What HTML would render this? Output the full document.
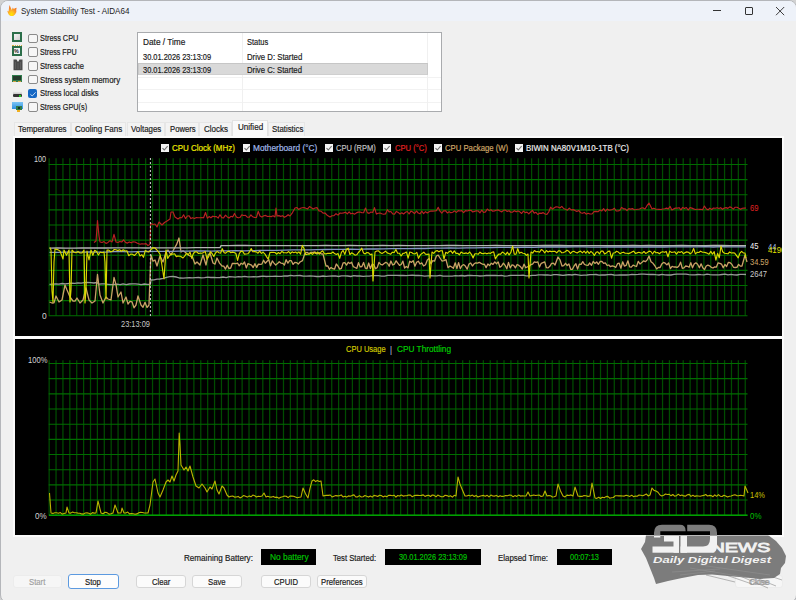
<!DOCTYPE html>
<html><head><meta charset="utf-8"><style>
html,body{margin:0;padding:0;}
body{width:796px;height:600px;position:relative;overflow:hidden;background:#f0f0f0;font-family:"Liberation Sans",sans-serif;}
.t{position:absolute;white-space:nowrap;transform-origin:0 0;line-height:1;-webkit-text-stroke:0.18px currentColor;}
</style></head><body>
<div style="position:absolute;left:0;top:0;width:796px;height:600px;background:#d2d2d2"></div><div style="position:absolute;left:0;top:0;width:797px;height:603px;box-sizing:border-box;border:1px solid #b4b6ba;border-radius:8px;background:#f0f0f0;overflow:hidden"><div style="height:20px;background:#eef2f9"></div></div><svg style="position:absolute;left:6px;top:4px" width="12" height="12" viewBox="0 0 12 12">
<defs><radialGradient id="fl" cx="0.45" cy="0.85" r="0.75"><stop offset="0" stop-color="#ffe800"/><stop offset="0.35" stop-color="#ffc020"/><stop offset="0.7" stop-color="#f89028"/><stop offset="1" stop-color="#f07020"/></radialGradient></defs>
<path d="M5 12.2 L3 11 L2 9 L1.3 6.8 L2.6 7.4 L3 4 L3.6 1 L4.6 3.4 L5.8 6 L6.8 3.6 L7.8 5 L9 4.2 L10.6 3.8 L10.2 6 L10.4 8 L9 10.6 L7.2 12 Z" fill="url(#fl)"/></svg><div class="t" style="left:21.40px;top:6.52px;font-size:8.6px;color:#1b1b1b;transform:scaleX(0.9355);-webkit-text-stroke:0;">System Stability Test - AIDA64</div><div style="position:absolute;left:713.3px;top:10.2px;width:8px;height:1px;background:#333"></div><div style="position:absolute;left:744.6px;top:6.9px;width:6.4px;height:6.4px;border:0.9px solid #333;border-radius:1px"></div><svg style="position:absolute;left:775px;top:6px" width="10" height="10" viewBox="0 0 10 10"><path d="M1 1 L9.2 9.2 M9.2 1 L1 9.2" stroke="#333" stroke-width="0.95"/></svg><div style="position:absolute;left:28px;top:33.5px;width:7.6px;height:7.6px;border:0.9px solid #8a8a8a;background:#f6f6f6;border-radius:2px"></div><div class="t" style="left:39.60px;top:34.29px;font-size:8.4px;color:#1a1a1a;transform:scaleX(0.8775);">Stress CPU</div><div style="position:absolute;left:28px;top:47.2px;width:7.6px;height:7.6px;border:0.9px solid #8a8a8a;background:#f6f6f6;border-radius:2px"></div><div class="t" style="left:39.60px;top:48.04px;font-size:8.4px;color:#1a1a1a;transform:scaleX(0.8547);">Stress FPU</div><div style="position:absolute;left:28px;top:61.0px;width:7.6px;height:7.6px;border:0.9px solid #8a8a8a;background:#f6f6f6;border-radius:2px"></div><div class="t" style="left:39.60px;top:61.79px;font-size:8.4px;color:#1a1a1a;transform:scaleX(0.9062);">Stress cache</div><div style="position:absolute;left:28px;top:74.8px;width:7.6px;height:7.6px;border:0.9px solid #8a8a8a;background:#f6f6f6;border-radius:2px"></div><div class="t" style="left:39.60px;top:75.54px;font-size:8.4px;color:#1a1a1a;transform:scaleX(0.9402);">Stress system memory</div><div style="position:absolute;left:28px;top:88.5px;width:9.4px;height:9.4px;background:#1668c4;border-radius:2px"></div><svg style="position:absolute;left:28px;top:88.5px" width="10" height="10" viewBox="0 0 10 10"><path d="M2.4 5.3 L4.2 7 L7.6 3.3" stroke="#cfe0f5" stroke-width="0.9" fill="none"/></svg><div class="t" style="left:39.60px;top:89.29px;font-size:8.4px;color:#1a1a1a;transform:scaleX(0.9062);">Stress local disks</div><div style="position:absolute;left:28px;top:102.3px;width:7.6px;height:7.6px;border:0.9px solid #8a8a8a;background:#f6f6f6;border-radius:2px"></div><div class="t" style="left:39.60px;top:103.04px;font-size:8.4px;color:#1a1a1a;transform:scaleX(0.8719);">Stress GPU(s)</div><div style="position:absolute;left:11.6px;top:31.6px;width:10.8px;height:10.8px;border:0.6px dotted #d8b040;box-sizing:border-box"></div><div style="position:absolute;left:12px;top:32px;width:10px;height:10px;box-sizing:border-box;border:2px solid #2b6e49;background:linear-gradient(135deg,#f4f4f4,#cfcfcf)"></div><div style="position:absolute;left:11.6px;top:45.4px;width:10.8px;height:10.8px;border:0.6px dotted #d8b040;box-sizing:border-box"></div><div style="position:absolute;left:12px;top:45.8px;width:10px;height:10px;box-sizing:border-box;border:2px solid #2b6e49;background:#f2f2f2"></div><div style="position:absolute;left:14px;top:47.8px;font:bold 6px/6px 'Liberation Sans',sans-serif;color:#222;transform:scaleX(0.9);transform-origin:0 0">%</div><svg style="position:absolute;left:12.5px;top:59.3px" width="10" height="12" viewBox="0 0 10 12"><path d="M0.5 0.5 L3.5 0.5 L5 3 L6.5 0.5 L9.5 0.5 L9.5 11.3 L0.5 11.3 Z" fill="#4a4a4a"/><path d="M2.5 3 V10 M5 4 V10 M7.5 3 V10" stroke="#6a6a6a" stroke-width="0.6"/></svg><div style="position:absolute;left:12px;top:75px;width:10px;height:7px;background:#2f7d4c"></div><div style="position:absolute;left:12.8px;top:76px;width:8.4px;height:3.6px;background:#263a2c"></div><div style="position:absolute;left:13px;top:80.5px;width:3px;height:1.3px;background:#d0a040"></div><div style="position:absolute;left:18px;top:80.5px;width:3px;height:1.3px;background:#d0a040"></div><div style="position:absolute;left:13px;top:91.3px;width:9px;height:3px;background:linear-gradient(#f6f6f6,#c8c8c8)"></div><div style="position:absolute;left:13px;top:94.3px;width:9px;height:2.8px;background:#333;border-radius:1px"></div><div style="position:absolute;left:19.3px;top:94.6px;width:1.4px;height:2px;background:#2c2"></div><div style="position:absolute;left:12px;top:101.7px;width:10.8px;height:7.3px;background:linear-gradient(#7cc4f4,#2e8fe0)"></div><div style="position:absolute;left:16.2px;top:105.6px;width:6px;height:4.8px;background:#2e7a48"></div><div style="position:absolute;left:18px;top:106.6px;width:2.4px;height:2.4px;background:#1e2e22"></div><div style="position:absolute;left:17px;top:110.3px;width:3.4px;height:1.3px;background:#f0b020"></div><div style="position:absolute;left:137.3px;top:32.3px;width:302.5px;height:77.5px;border:1px solid #a9abae;background:#fff"></div><div style="position:absolute;left:138px;top:76.5px;width:303px;height:1px;background:#f2f2f2"></div><div style="position:absolute;left:138px;top:89.2px;width:303px;height:1px;background:#f2f2f2"></div><div style="position:absolute;left:138px;top:101.9px;width:303px;height:1px;background:#f2f2f2"></div><div style="position:absolute;left:242px;top:33px;width:1px;height:78px;background:#f0f0f0"></div><div style="position:absolute;left:427px;top:33px;width:1px;height:78px;background:#f0f0f0"></div><div style="position:absolute;left:138px;top:63px;width:289.5px;height:12.3px;box-sizing:border-box;background:#d9d9d9;border-top:1.3px solid #c6c6c6;border-left:1px solid #cacaca;border-right:1px solid #cacaca;border-bottom:0.6px solid #cfcfcf"></div><div class="t" style="left:143.00px;top:37.79px;font-size:8.4px;color:#1a1a1a;transform:scaleX(0.9896);">Date / Time</div><div class="t" style="left:246.60px;top:37.79px;font-size:8.4px;color:#1a1a1a;transform:scaleX(0.8945);">Status</div><div class="t" style="left:142.80px;top:52.89px;font-size:8.4px;color:#1a1a1a;transform:scaleX(0.8863);">30.01.2026 23:13:09</div><div class="t" style="left:246.60px;top:52.89px;font-size:8.4px;color:#1a1a1a;transform:scaleX(0.9272);">Drive D: Started</div><div class="t" style="left:142.80px;top:66.49px;font-size:8.4px;color:#1a1a1a;transform:scaleX(0.8863);">30.01.2026 23:13:09</div><div class="t" style="left:246.60px;top:66.49px;font-size:8.4px;color:#1a1a1a;transform:scaleX(0.9222);">Drive C: Started</div><div style="position:absolute;left:14.3px;top:122px;width:56.60000000000001px;height:14px;background:#f3f3f3;border:1px solid #e6e6e6;border-bottom:none;box-sizing:border-box"></div><div class="t" style="left:17.90px;top:124.59px;font-size:8.4px;color:#1a1a1a;transform:scaleX(0.9484);">Temperatures</div><div style="position:absolute;left:70.9px;top:122px;width:55.599999999999994px;height:14px;background:#f3f3f3;border:1px solid #e6e6e6;border-bottom:none;box-sizing:border-box"></div><div class="t" style="left:75.20px;top:124.59px;font-size:8.4px;color:#1a1a1a;transform:scaleX(0.9578);">Cooling Fans</div><div style="position:absolute;left:126.5px;top:122px;width:38.5px;height:14px;background:#f3f3f3;border:1px solid #e6e6e6;border-bottom:none;box-sizing:border-box"></div><div class="t" style="left:130.70px;top:124.59px;font-size:8.4px;color:#1a1a1a;transform:scaleX(0.9403);">Voltages</div><div style="position:absolute;left:165px;top:122px;width:34px;height:14px;background:#f3f3f3;border:1px solid #e6e6e6;border-bottom:none;box-sizing:border-box"></div><div class="t" style="left:169.70px;top:124.59px;font-size:8.4px;color:#1a1a1a;transform:scaleX(0.9211);">Powers</div><div style="position:absolute;left:199px;top:122px;width:32.80000000000001px;height:14px;background:#f3f3f3;border:1px solid #e6e6e6;border-bottom:none;box-sizing:border-box"></div><div class="t" style="left:204.00px;top:124.59px;font-size:8.4px;color:#1a1a1a;transform:scaleX(0.9522);">Clocks</div><div style="position:absolute;left:231.8px;top:120px;width:36.39999999999998px;height:17px;background:#fafafa;border:1px solid #e2e2e2;border-bottom:none;box-sizing:border-box"></div><div class="t" style="left:237.60px;top:123.29px;font-size:8.4px;color:#1a1a1a;transform:scaleX(0.9638);">Unified</div><div style="position:absolute;left:268.2px;top:122px;width:37.30000000000001px;height:14px;background:#f3f3f3;border:1px solid #e6e6e6;border-bottom:none;box-sizing:border-box"></div><div class="t" style="left:271.80px;top:124.59px;font-size:8.4px;color:#1a1a1a;transform:scaleX(0.9343);">Statistics</div><div style="position:absolute;left:13px;top:136px;width:771px;height:401px;background:#fbfbfb"></div><div style="position:absolute;left:14.5px;top:137.8px;width:767.5px;height:198.4px;background:#000"></div><div style="position:absolute;left:14.5px;top:339px;width:767.5px;height:196.3px;background:#000"></div>
<svg style="position:absolute;left:0;top:0" width="796" height="600" viewBox="0 0 796 600"><g stroke="#004c00" stroke-width="1.25"><line x1="49.15" y1="158.3" x2="49.15" y2="315.8"/><line x1="56.04" y1="158.3" x2="56.04" y2="315.8"/><line x1="62.93" y1="158.3" x2="62.93" y2="315.8"/><line x1="69.83" y1="158.3" x2="69.83" y2="315.8"/><line x1="76.72" y1="158.3" x2="76.72" y2="315.8"/><line x1="83.61" y1="158.3" x2="83.61" y2="315.8"/><line x1="90.50" y1="158.3" x2="90.50" y2="315.8"/><line x1="97.39" y1="158.3" x2="97.39" y2="315.8"/><line x1="104.29" y1="158.3" x2="104.29" y2="315.8"/><line x1="111.18" y1="158.3" x2="111.18" y2="315.8"/><line x1="118.07" y1="158.3" x2="118.07" y2="315.8"/><line x1="124.96" y1="158.3" x2="124.96" y2="315.8"/><line x1="131.85" y1="158.3" x2="131.85" y2="315.8"/><line x1="138.75" y1="158.3" x2="138.75" y2="315.8"/><line x1="145.64" y1="158.3" x2="145.64" y2="315.8"/><line x1="152.53" y1="158.3" x2="152.53" y2="315.8"/><line x1="159.42" y1="158.3" x2="159.42" y2="315.8"/><line x1="166.31" y1="158.3" x2="166.31" y2="315.8"/><line x1="173.21" y1="158.3" x2="173.21" y2="315.8"/><line x1="180.10" y1="158.3" x2="180.10" y2="315.8"/><line x1="186.99" y1="158.3" x2="186.99" y2="315.8"/><line x1="193.88" y1="158.3" x2="193.88" y2="315.8"/><line x1="200.77" y1="158.3" x2="200.77" y2="315.8"/><line x1="207.67" y1="158.3" x2="207.67" y2="315.8"/><line x1="214.56" y1="158.3" x2="214.56" y2="315.8"/><line x1="221.45" y1="158.3" x2="221.45" y2="315.8"/><line x1="228.34" y1="158.3" x2="228.34" y2="315.8"/><line x1="235.23" y1="158.3" x2="235.23" y2="315.8"/><line x1="242.13" y1="158.3" x2="242.13" y2="315.8"/><line x1="249.02" y1="158.3" x2="249.02" y2="315.8"/><line x1="255.91" y1="158.3" x2="255.91" y2="315.8"/><line x1="262.80" y1="158.3" x2="262.80" y2="315.8"/><line x1="269.69" y1="158.3" x2="269.69" y2="315.8"/><line x1="276.59" y1="158.3" x2="276.59" y2="315.8"/><line x1="283.48" y1="158.3" x2="283.48" y2="315.8"/><line x1="290.37" y1="158.3" x2="290.37" y2="315.8"/><line x1="297.26" y1="158.3" x2="297.26" y2="315.8"/><line x1="304.15" y1="158.3" x2="304.15" y2="315.8"/><line x1="311.05" y1="158.3" x2="311.05" y2="315.8"/><line x1="317.94" y1="158.3" x2="317.94" y2="315.8"/><line x1="324.83" y1="158.3" x2="324.83" y2="315.8"/><line x1="331.72" y1="158.3" x2="331.72" y2="315.8"/><line x1="338.61" y1="158.3" x2="338.61" y2="315.8"/><line x1="345.51" y1="158.3" x2="345.51" y2="315.8"/><line x1="352.40" y1="158.3" x2="352.40" y2="315.8"/><line x1="359.29" y1="158.3" x2="359.29" y2="315.8"/><line x1="366.18" y1="158.3" x2="366.18" y2="315.8"/><line x1="373.07" y1="158.3" x2="373.07" y2="315.8"/><line x1="379.97" y1="158.3" x2="379.97" y2="315.8"/><line x1="386.86" y1="158.3" x2="386.86" y2="315.8"/><line x1="393.75" y1="158.3" x2="393.75" y2="315.8"/><line x1="400.64" y1="158.3" x2="400.64" y2="315.8"/><line x1="407.53" y1="158.3" x2="407.53" y2="315.8"/><line x1="414.43" y1="158.3" x2="414.43" y2="315.8"/><line x1="421.32" y1="158.3" x2="421.32" y2="315.8"/><line x1="428.21" y1="158.3" x2="428.21" y2="315.8"/><line x1="435.10" y1="158.3" x2="435.10" y2="315.8"/><line x1="441.99" y1="158.3" x2="441.99" y2="315.8"/><line x1="448.89" y1="158.3" x2="448.89" y2="315.8"/><line x1="455.78" y1="158.3" x2="455.78" y2="315.8"/><line x1="462.67" y1="158.3" x2="462.67" y2="315.8"/><line x1="469.56" y1="158.3" x2="469.56" y2="315.8"/><line x1="476.45" y1="158.3" x2="476.45" y2="315.8"/><line x1="483.35" y1="158.3" x2="483.35" y2="315.8"/><line x1="490.24" y1="158.3" x2="490.24" y2="315.8"/><line x1="497.13" y1="158.3" x2="497.13" y2="315.8"/><line x1="504.02" y1="158.3" x2="504.02" y2="315.8"/><line x1="510.91" y1="158.3" x2="510.91" y2="315.8"/><line x1="517.81" y1="158.3" x2="517.81" y2="315.8"/><line x1="524.70" y1="158.3" x2="524.70" y2="315.8"/><line x1="531.59" y1="158.3" x2="531.59" y2="315.8"/><line x1="538.48" y1="158.3" x2="538.48" y2="315.8"/><line x1="545.37" y1="158.3" x2="545.37" y2="315.8"/><line x1="552.27" y1="158.3" x2="552.27" y2="315.8"/><line x1="559.16" y1="158.3" x2="559.16" y2="315.8"/><line x1="566.05" y1="158.3" x2="566.05" y2="315.8"/><line x1="572.94" y1="158.3" x2="572.94" y2="315.8"/><line x1="579.83" y1="158.3" x2="579.83" y2="315.8"/><line x1="586.73" y1="158.3" x2="586.73" y2="315.8"/><line x1="593.62" y1="158.3" x2="593.62" y2="315.8"/><line x1="600.51" y1="158.3" x2="600.51" y2="315.8"/><line x1="607.40" y1="158.3" x2="607.40" y2="315.8"/><line x1="614.29" y1="158.3" x2="614.29" y2="315.8"/><line x1="621.19" y1="158.3" x2="621.19" y2="315.8"/><line x1="628.08" y1="158.3" x2="628.08" y2="315.8"/><line x1="634.97" y1="158.3" x2="634.97" y2="315.8"/><line x1="641.86" y1="158.3" x2="641.86" y2="315.8"/><line x1="648.75" y1="158.3" x2="648.75" y2="315.8"/><line x1="655.65" y1="158.3" x2="655.65" y2="315.8"/><line x1="662.54" y1="158.3" x2="662.54" y2="315.8"/><line x1="669.43" y1="158.3" x2="669.43" y2="315.8"/><line x1="676.32" y1="158.3" x2="676.32" y2="315.8"/><line x1="683.21" y1="158.3" x2="683.21" y2="315.8"/><line x1="690.11" y1="158.3" x2="690.11" y2="315.8"/><line x1="697.00" y1="158.3" x2="697.00" y2="315.8"/><line x1="703.89" y1="158.3" x2="703.89" y2="315.8"/><line x1="710.78" y1="158.3" x2="710.78" y2="315.8"/><line x1="717.67" y1="158.3" x2="717.67" y2="315.8"/><line x1="724.57" y1="158.3" x2="724.57" y2="315.8"/><line x1="731.46" y1="158.3" x2="731.46" y2="315.8"/><line x1="738.35" y1="158.3" x2="738.35" y2="315.8"/><line x1="745.24" y1="158.3" x2="745.24" y2="315.8"/></g><g stroke="#006c00" stroke-width="1.1"><line x1="48.699999999999996" y1="315.80" x2="747.5" y2="315.80"/><line x1="48.699999999999996" y1="300.67" x2="747.5" y2="300.67"/><line x1="48.699999999999996" y1="285.54" x2="747.5" y2="285.54"/><line x1="48.699999999999996" y1="270.41" x2="747.5" y2="270.41"/><line x1="48.699999999999996" y1="255.28" x2="747.5" y2="255.28"/><line x1="48.699999999999996" y1="240.15" x2="747.5" y2="240.15"/><line x1="48.699999999999996" y1="225.02" x2="747.5" y2="225.02"/><line x1="48.699999999999996" y1="209.89" x2="747.5" y2="209.89"/><line x1="48.699999999999996" y1="194.76" x2="747.5" y2="194.76"/><line x1="48.699999999999996" y1="179.63" x2="747.5" y2="179.63"/><line x1="48.699999999999996" y1="164.50" x2="747.5" y2="164.50"/></g><g stroke="#004c00" stroke-width="1.25"><line x1="49.15" y1="360.2" x2="49.15" y2="515.25"/><line x1="56.04" y1="360.2" x2="56.04" y2="515.25"/><line x1="62.93" y1="360.2" x2="62.93" y2="515.25"/><line x1="69.83" y1="360.2" x2="69.83" y2="515.25"/><line x1="76.72" y1="360.2" x2="76.72" y2="515.25"/><line x1="83.61" y1="360.2" x2="83.61" y2="515.25"/><line x1="90.50" y1="360.2" x2="90.50" y2="515.25"/><line x1="97.39" y1="360.2" x2="97.39" y2="515.25"/><line x1="104.29" y1="360.2" x2="104.29" y2="515.25"/><line x1="111.18" y1="360.2" x2="111.18" y2="515.25"/><line x1="118.07" y1="360.2" x2="118.07" y2="515.25"/><line x1="124.96" y1="360.2" x2="124.96" y2="515.25"/><line x1="131.85" y1="360.2" x2="131.85" y2="515.25"/><line x1="138.75" y1="360.2" x2="138.75" y2="515.25"/><line x1="145.64" y1="360.2" x2="145.64" y2="515.25"/><line x1="152.53" y1="360.2" x2="152.53" y2="515.25"/><line x1="159.42" y1="360.2" x2="159.42" y2="515.25"/><line x1="166.31" y1="360.2" x2="166.31" y2="515.25"/><line x1="173.21" y1="360.2" x2="173.21" y2="515.25"/><line x1="180.10" y1="360.2" x2="180.10" y2="515.25"/><line x1="186.99" y1="360.2" x2="186.99" y2="515.25"/><line x1="193.88" y1="360.2" x2="193.88" y2="515.25"/><line x1="200.77" y1="360.2" x2="200.77" y2="515.25"/><line x1="207.67" y1="360.2" x2="207.67" y2="515.25"/><line x1="214.56" y1="360.2" x2="214.56" y2="515.25"/><line x1="221.45" y1="360.2" x2="221.45" y2="515.25"/><line x1="228.34" y1="360.2" x2="228.34" y2="515.25"/><line x1="235.23" y1="360.2" x2="235.23" y2="515.25"/><line x1="242.13" y1="360.2" x2="242.13" y2="515.25"/><line x1="249.02" y1="360.2" x2="249.02" y2="515.25"/><line x1="255.91" y1="360.2" x2="255.91" y2="515.25"/><line x1="262.80" y1="360.2" x2="262.80" y2="515.25"/><line x1="269.69" y1="360.2" x2="269.69" y2="515.25"/><line x1="276.59" y1="360.2" x2="276.59" y2="515.25"/><line x1="283.48" y1="360.2" x2="283.48" y2="515.25"/><line x1="290.37" y1="360.2" x2="290.37" y2="515.25"/><line x1="297.26" y1="360.2" x2="297.26" y2="515.25"/><line x1="304.15" y1="360.2" x2="304.15" y2="515.25"/><line x1="311.05" y1="360.2" x2="311.05" y2="515.25"/><line x1="317.94" y1="360.2" x2="317.94" y2="515.25"/><line x1="324.83" y1="360.2" x2="324.83" y2="515.25"/><line x1="331.72" y1="360.2" x2="331.72" y2="515.25"/><line x1="338.61" y1="360.2" x2="338.61" y2="515.25"/><line x1="345.51" y1="360.2" x2="345.51" y2="515.25"/><line x1="352.40" y1="360.2" x2="352.40" y2="515.25"/><line x1="359.29" y1="360.2" x2="359.29" y2="515.25"/><line x1="366.18" y1="360.2" x2="366.18" y2="515.25"/><line x1="373.07" y1="360.2" x2="373.07" y2="515.25"/><line x1="379.97" y1="360.2" x2="379.97" y2="515.25"/><line x1="386.86" y1="360.2" x2="386.86" y2="515.25"/><line x1="393.75" y1="360.2" x2="393.75" y2="515.25"/><line x1="400.64" y1="360.2" x2="400.64" y2="515.25"/><line x1="407.53" y1="360.2" x2="407.53" y2="515.25"/><line x1="414.43" y1="360.2" x2="414.43" y2="515.25"/><line x1="421.32" y1="360.2" x2="421.32" y2="515.25"/><line x1="428.21" y1="360.2" x2="428.21" y2="515.25"/><line x1="435.10" y1="360.2" x2="435.10" y2="515.25"/><line x1="441.99" y1="360.2" x2="441.99" y2="515.25"/><line x1="448.89" y1="360.2" x2="448.89" y2="515.25"/><line x1="455.78" y1="360.2" x2="455.78" y2="515.25"/><line x1="462.67" y1="360.2" x2="462.67" y2="515.25"/><line x1="469.56" y1="360.2" x2="469.56" y2="515.25"/><line x1="476.45" y1="360.2" x2="476.45" y2="515.25"/><line x1="483.35" y1="360.2" x2="483.35" y2="515.25"/><line x1="490.24" y1="360.2" x2="490.24" y2="515.25"/><line x1="497.13" y1="360.2" x2="497.13" y2="515.25"/><line x1="504.02" y1="360.2" x2="504.02" y2="515.25"/><line x1="510.91" y1="360.2" x2="510.91" y2="515.25"/><line x1="517.81" y1="360.2" x2="517.81" y2="515.25"/><line x1="524.70" y1="360.2" x2="524.70" y2="515.25"/><line x1="531.59" y1="360.2" x2="531.59" y2="515.25"/><line x1="538.48" y1="360.2" x2="538.48" y2="515.25"/><line x1="545.37" y1="360.2" x2="545.37" y2="515.25"/><line x1="552.27" y1="360.2" x2="552.27" y2="515.25"/><line x1="559.16" y1="360.2" x2="559.16" y2="515.25"/><line x1="566.05" y1="360.2" x2="566.05" y2="515.25"/><line x1="572.94" y1="360.2" x2="572.94" y2="515.25"/><line x1="579.83" y1="360.2" x2="579.83" y2="515.25"/><line x1="586.73" y1="360.2" x2="586.73" y2="515.25"/><line x1="593.62" y1="360.2" x2="593.62" y2="515.25"/><line x1="600.51" y1="360.2" x2="600.51" y2="515.25"/><line x1="607.40" y1="360.2" x2="607.40" y2="515.25"/><line x1="614.29" y1="360.2" x2="614.29" y2="515.25"/><line x1="621.19" y1="360.2" x2="621.19" y2="515.25"/><line x1="628.08" y1="360.2" x2="628.08" y2="515.25"/><line x1="634.97" y1="360.2" x2="634.97" y2="515.25"/><line x1="641.86" y1="360.2" x2="641.86" y2="515.25"/><line x1="648.75" y1="360.2" x2="648.75" y2="515.25"/><line x1="655.65" y1="360.2" x2="655.65" y2="515.25"/><line x1="662.54" y1="360.2" x2="662.54" y2="515.25"/><line x1="669.43" y1="360.2" x2="669.43" y2="515.25"/><line x1="676.32" y1="360.2" x2="676.32" y2="515.25"/><line x1="683.21" y1="360.2" x2="683.21" y2="515.25"/><line x1="690.11" y1="360.2" x2="690.11" y2="515.25"/><line x1="697.00" y1="360.2" x2="697.00" y2="515.25"/><line x1="703.89" y1="360.2" x2="703.89" y2="515.25"/><line x1="710.78" y1="360.2" x2="710.78" y2="515.25"/><line x1="717.67" y1="360.2" x2="717.67" y2="515.25"/><line x1="724.57" y1="360.2" x2="724.57" y2="515.25"/><line x1="731.46" y1="360.2" x2="731.46" y2="515.25"/><line x1="738.35" y1="360.2" x2="738.35" y2="515.25"/><line x1="745.24" y1="360.2" x2="745.24" y2="515.25"/></g><g stroke="#006c00" stroke-width="1.1"><line x1="48.699999999999996" y1="515.25" x2="747.5" y2="515.25"/><line x1="48.699999999999996" y1="500.07" x2="747.5" y2="500.07"/><line x1="48.699999999999996" y1="484.90" x2="747.5" y2="484.90"/><line x1="48.699999999999996" y1="469.73" x2="747.5" y2="469.73"/><line x1="48.699999999999996" y1="454.55" x2="747.5" y2="454.55"/><line x1="48.699999999999996" y1="439.38" x2="747.5" y2="439.38"/><line x1="48.699999999999996" y1="424.20" x2="747.5" y2="424.20"/><line x1="48.699999999999996" y1="409.02" x2="747.5" y2="409.02"/><line x1="48.699999999999996" y1="393.85" x2="747.5" y2="393.85"/><line x1="48.699999999999996" y1="378.67" x2="747.5" y2="378.67"/><line x1="48.699999999999996" y1="363.50" x2="747.5" y2="363.50"/></g><line x1="49" y1="515.25" x2="747.5" y2="515.25" stroke="#00a000" stroke-width="1.3"/><polyline points="49.5,284.4 52.7,284.1 55.8,283.8 59.0,284.2 62.2,283.5 65.3,283.8 68.5,283.5 71.7,283.1 74.8,283.4 78.0,282.8 81.2,283.1 84.3,282.6 87.5,282.5 90.7,282.7 93.8,283.0 97.0,282.5 99.0,284.2 102.0,283.8 105.0,283.9 108.1,284.3 111.1,284.7 114.1,284.3 117.1,284.1 120.1,284.7 123.1,283.8 126.2,284.6 129.2,284.0 132.2,283.9 135.2,283.9 138.2,284.1 141.2,284.6 144.3,284.0 147.3,284.4 150.3,284.3 151.0,280.0 154.0,279.8 157.0,279.2 160.0,279.0 163.2,278.4 166.5,277.3 169.8,276.7 173.0,276.5 176.5,277.0 180.0,278.0 183.1,278.1 186.2,277.8 189.2,277.6 192.3,277.9 195.4,277.7 198.5,277.5 201.5,277.9 204.6,277.7 207.7,277.2 210.8,277.5 213.8,277.4 216.9,277.7 220.0,277.5 223.1,277.0 226.2,277.6 229.2,276.7 232.3,276.9 235.4,277.2 238.5,276.6 241.5,276.8 244.6,276.3 247.7,276.9 250.8,276.9 253.8,276.7 256.9,276.9 260.0,276.5 263.1,276.2 266.2,276.5 269.2,276.4 272.3,276.3 275.4,276.1 278.5,276.4 281.5,276.4 284.6,275.9 287.7,276.0 290.8,275.3 293.8,275.9 296.9,275.7 300.0,275.5 303.3,276.2 306.7,276.2 310.0,275.8 313.3,276.1 316.7,276.5 320.0,276.5 323.1,276.0 326.2,276.4 329.2,276.1 332.3,276.0 335.4,275.9 338.5,276.5 341.5,275.9 344.6,275.9 347.7,276.0 350.8,276.5 353.8,275.7 356.9,276.0 360.0,276.0 363.1,276.3 366.2,276.2 369.2,276.2 372.3,275.6 375.4,275.7 378.5,275.6 381.5,276.1 384.6,276.2 387.7,275.3 390.8,275.3 393.8,275.3 396.9,275.3 400.0,275.5 403.1,275.5 406.2,275.6 409.2,275.3 412.3,275.1 415.4,275.5 418.5,275.5 421.5,275.7 424.6,276.1 427.7,275.9 430.8,275.7 433.8,275.8 436.9,275.9 440.0,275.3 443.1,276.2 446.2,276.1 449.2,276.2 452.3,276.1 455.4,275.7 458.5,275.8 461.5,275.5 464.6,276.0 467.7,275.5 470.8,275.5 473.8,275.7 476.9,275.6 480.0,276.0 483.1,275.8 486.2,275.5 489.2,275.4 492.3,275.5 495.4,275.4 498.5,275.6 501.5,275.3 504.6,276.1 507.7,275.8 510.8,275.3 513.8,275.3 516.9,275.4 520.0,275.4 523.1,275.1 526.2,275.8 529.2,275.9 532.3,275.3 535.4,275.3 538.5,274.9 541.5,274.8 544.6,275.0 547.7,274.9 550.8,275.4 553.8,274.7 556.9,274.6 560.0,275.0 563.0,275.4 566.0,275.0 569.0,274.6 572.0,275.0 575.0,274.4 578.0,274.9 581.0,275.4 584.0,275.2 587.0,275.0 590.0,274.6 593.0,274.7 596.0,274.5 599.0,275.1 602.0,274.8 605.0,275.0 608.0,274.6 611.0,274.4 614.0,275.0 617.0,275.2 620.0,275.0 623.0,275.0 626.0,275.0 629.0,274.9 632.0,274.3 635.0,274.6 638.0,274.4 641.0,274.1 644.0,274.1 647.0,274.3 650.0,274.5 653.0,274.3 656.0,274.7 659.0,275.0 662.0,274.4 665.0,274.9 668.0,275.0 671.0,275.0 674.0,274.4 677.0,274.2 680.0,274.2 683.0,274.2 686.0,274.2 689.0,274.6 692.0,274.9 695.0,274.8 698.0,274.5 701.0,274.7 704.0,274.8 707.0,274.1 710.0,274.7 713.0,274.9 716.0,274.8 719.0,274.8 722.0,274.5 725.0,274.2 728.0,274.8 731.0,274.3 734.0,274.8 737.0,275.0 740.0,274.4 743.0,274.4 746.0,274.5" fill="none" stroke="#969b96" stroke-width="1.3" stroke-linejoin="round" opacity="1"/><polyline points="49.5,302.0 52.0,303.0 54.0,302.9 56.0,296.0 59.0,302.0 62.0,300.0 65.0,285.0 67.0,290.0 70.0,297.0 73.0,301.0 75.0,301.2 77.0,298.0 80.0,303.0 83.0,300.0 86.0,288.0 89.0,300.0 92.0,303.0 95.0,301.0 97.5,274.5 100.0,295.0 103.0,303.0 106.0,297.0 108.0,299.0 111.0,300.0 114.0,277.5 116.0,284.7 118.0,297.0 121.0,292.0 123.0,303.0 126.0,297.0 128.0,304.0 130.0,301.4 132.0,301.8 134.0,307.8 136.0,305.0 138.0,296.0 141.0,305.0 143.0,307.3 145.0,302.3 147.0,307.5 149.0,305.0 150.6,262.0 151.0,255.0 153.0,261.2 155.0,260.0 157.0,266.0 160.0,256.0 163.0,262.0 166.0,252.0 168.0,250.0 171.0,255.0 174.0,249.0 176.5,244.7 179.0,238.0 181.0,252.0 183.0,250.9 185.0,252.0 187.5,254.4 190.0,256.0 192.5,257.2 195.0,264.0 197.0,262.0 200.0,265.0 203.0,255.0 206.0,265.0 208.0,255.3 210.0,253.0 213.0,263.0 215.0,264.1 217.0,258.0 219.5,263.1 222.0,266.0 223.7,266.1 225.5,269.1 227.2,265.2 228.9,268.5 230.7,268.0 232.4,263.3 234.1,263.5 235.9,263.7 237.6,263.2 239.3,265.8 241.1,263.2 242.8,264.3 244.5,262.0 246.3,267.9 248.0,263.6 249.7,264.3 251.5,265.1 253.2,267.5 254.9,263.7 256.7,267.4 258.4,264.1 260.1,264.3 261.9,264.1 263.6,260.2 265.3,263.3 267.1,261.3 268.8,259.8 270.5,265.8 272.3,260.9 274.0,263.1 275.7,265.0 277.5,263.6 279.2,261.7 280.9,263.1 282.7,263.3 284.4,265.0 286.1,259.7 287.9,263.1 289.6,260.6 291.3,260.7 293.1,264.4 294.8,262.3 296.5,262.6 298.3,264.1 300.0,262.0 302.5,260.6 305.0,253.0 307.0,252.4 309.0,253.5 311.0,252.4 313.0,252.3 315.0,252.0 317.0,254.0 319.0,252.6 321.0,253.8 323.0,254.0 326.0,266.0 327.7,265.8 329.4,269.3 331.1,267.4 332.8,268.7 334.5,269.2 336.3,264.0 338.0,266.2 339.7,269.1 341.4,268.3 343.1,262.9 344.8,262.7 346.5,265.1 348.2,262.3 349.9,263.5 351.6,262.2 353.3,266.7 355.1,267.5 356.8,268.4 358.5,262.7 360.2,266.9 361.9,266.5 363.6,262.5 365.3,268.1 367.0,268.7 368.7,263.0 370.4,268.5 372.1,264.2 373.9,264.9 375.6,268.7 377.3,267.4 379.0,262.3 380.7,264.3 382.4,264.9 384.1,263.5 385.8,262.4 387.5,263.3 389.2,266.3 390.9,261.0 392.7,265.0 394.4,264.1 396.1,260.8 397.8,263.2 399.5,265.4 401.2,264.5 402.9,261.1 404.6,268.0 406.3,266.5 408.0,267.8 409.7,261.2 411.5,262.4 413.2,260.6 414.9,266.2 416.6,262.3 418.3,261.2 420.0,264.0 421.8,262.9 423.6,266.0 425.5,264.8 427.3,260.0 429.1,258.6 430.9,263.9 432.7,260.7 434.5,261.2 436.4,256.0 438.2,255.2 440.0,258.0 442.0,261.0 444.0,260.6 446.0,259.6 448.0,267.7 450.0,266.0 451.7,267.0 453.4,268.3 455.2,262.8 456.9,268.6 458.6,262.6 460.3,268.7 462.0,265.5 463.8,264.6 465.5,266.3 467.2,269.1 468.9,264.1 470.7,263.0 472.4,266.0 474.1,263.8 475.8,262.8 477.5,263.2 479.3,262.3 481.0,263.4 482.7,264.3 484.4,264.2 486.1,267.6 487.9,264.0 489.6,265.6 491.3,263.2 493.0,264.4 494.8,261.9 496.5,263.7 498.2,261.9 499.9,267.3 501.6,265.9 503.4,263.1 505.1,265.3 506.8,268.8 508.5,262.5 510.2,267.9 512.0,264.9 513.7,265.4 515.4,267.9 517.1,264.5 518.9,265.4 520.6,266.8 522.3,269.0 524.0,264.1 525.7,267.8 527.5,266.8 529.2,266.3 530.9,264.5 532.6,264.1 534.3,261.8 536.1,262.4 537.8,261.9 539.5,267.0 541.2,263.3 543.0,262.6 544.7,261.9 546.4,267.7 548.1,267.9 549.8,266.3 551.6,263.4 553.3,263.1 555.0,265.0 558.0,257.0 560.0,259.9 562.0,266.0 563.7,265.6 565.5,263.3 567.2,265.5 568.9,264.0 570.7,269.3 572.4,269.3 574.1,266.0 575.9,263.7 577.6,269.1 579.3,264.1 581.1,264.4 582.8,261.7 584.5,264.5 586.3,265.2 588.0,265.4 589.7,263.0 591.5,265.3 593.2,261.4 594.9,263.4 596.7,262.0 598.4,264.3 600.1,261.5 601.9,261.3 603.6,263.4 605.3,262.9 607.1,265.5 608.8,265.0 610.5,266.7 612.3,265.9 614.0,266.3 615.7,267.5 617.5,263.7 619.2,263.2 620.9,268.2 622.7,261.8 624.4,266.1 626.1,265.4 627.9,260.8 629.6,266.8 631.3,267.2 633.1,265.1 634.8,265.9 636.5,266.5 638.3,261.3 640.0,264.0 641.8,262.6 643.6,260.8 645.4,261.7 647.2,259.9 649.0,256.0 651.0,261.8 653.0,263.3 655.0,266.0 656.7,269.0 658.4,267.4 660.1,267.5 661.8,263.9 663.5,262.4 665.2,263.2 666.9,264.9 668.6,263.0 670.4,268.6 672.1,266.4 673.8,267.0 675.5,267.0 677.2,267.4 678.9,265.9 680.6,262.2 682.3,268.3 684.0,267.9 685.7,266.0 687.4,266.3 689.1,267.2 690.8,262.7 692.5,267.8 694.2,264.1 695.9,262.8 697.6,264.2 699.4,267.7 701.1,263.8 702.8,267.8 704.5,269.6 706.2,266.0 707.9,265.1 709.6,265.8 711.3,267.4 713.0,268.0 714.7,266.9 716.4,267.1 718.1,262.8 719.8,263.3 721.5,264.1 723.2,267.8 724.9,264.5 726.6,266.5 728.4,262.3 730.1,262.7 731.8,264.2 733.5,267.3 735.2,267.5 736.9,267.3 738.6,264.4 740.3,266.1 742.0,266.0 745.0,255.0 747.0,262.0" fill="none" stroke="#c9a266" stroke-width="1.3" stroke-linejoin="round" opacity="1"/><polyline points="49.5,252.4 57.6,252.3 65.7,252.2 73.8,252.1 81.9,252.2 90.0,251.9 98.1,252.1 106.2,252.0 114.3,251.7 122.4,251.7 130.5,251.8 138.6,251.7 146.7,251.5 154.8,251.4 162.8,251.3 170.9,251.4 179.0,251.1 187.1,251.2 195.2,251.0 203.3,251.0 211.4,251.1 219.5,250.8 227.6,250.9 235.7,250.7 243.8,250.8 251.9,250.6 260.0,250.5 268.2,250.3 276.5,250.4 284.7,250.2 292.9,249.9 301.2,249.8 309.4,249.8 317.6,249.7 325.9,249.5 334.1,249.4 342.4,249.3 350.6,249.2 358.8,249.3 367.1,248.9 375.3,249.0 383.5,248.9 391.8,248.6 400.0,248.6 408.3,248.6 416.7,248.5 425.0,248.5 433.3,248.2 441.7,248.1 450.0,248.0 458.3,248.1 466.7,247.9 475.0,247.8 483.3,247.7 491.7,247.6 500.0,247.4 508.3,247.3 516.7,247.5 525.0,247.2 533.3,247.3 541.7,247.0 550.0,247.0 558.2,246.9 566.3,247.0 574.5,246.9 582.7,246.9 590.8,247.1 599.0,247.1 607.2,247.0 615.3,247.0 623.5,247.0 631.7,247.0 639.8,246.9 648.0,247.0 656.2,246.8 664.3,247.0 672.5,246.9 680.7,246.9 688.8,246.9 697.0,246.8 705.2,246.7 713.3,247.0 721.5,246.7 729.7,246.8 737.8,246.8 746.0,246.8" fill="none" stroke="#8498c2" stroke-width="1.3" stroke-linejoin="round" opacity="1"/><polyline points="49.5,248.1 57.6,248.0 65.7,248.1 73.9,248.1 82.0,248.0 90.1,248.0 98.2,247.9 106.3,248.0 114.5,247.9 122.6,247.9 130.7,247.8 138.8,247.8 146.9,248.0 155.0,247.9 163.2,247.8 171.3,247.9 179.4,247.9 187.5,247.8 195.6,247.7 203.8,247.7 211.9,247.6 220.0,247.7 221.0,245.6 229.1,245.6 237.2,245.5 245.2,245.5 253.3,245.6 261.4,245.6 269.5,245.7 277.5,245.6 285.6,245.6 293.7,245.6 301.8,245.6 309.8,245.6 317.9,245.6 326.0,245.5 334.1,245.6 342.2,245.7 350.2,245.5 358.3,245.6 366.4,245.6 374.5,245.7 382.5,245.5 390.6,245.6 398.7,245.5 406.8,245.6 414.8,245.6 422.9,245.7 431.0,245.7 439.1,245.7 447.2,245.5 455.2,245.5 463.3,245.6 471.4,245.7 479.5,245.6 487.5,245.6 495.6,245.5 503.7,245.6 511.8,245.7 519.8,245.7 527.9,245.7 536.0,245.7 544.1,245.5 552.2,245.5 560.2,245.5 568.3,245.6 576.4,245.6 584.5,245.7 592.5,245.6 600.6,245.6 608.7,245.7 616.8,245.6 624.8,245.6 632.9,245.5 641.0,245.7 649.1,245.5 657.2,245.7 665.2,245.6 673.3,245.6 681.4,245.5 689.5,245.6 697.5,245.6 705.6,245.6 713.7,245.5 721.8,245.5 729.8,245.6 737.9,245.6 746.0,245.6" fill="none" stroke="#b4b4b4" stroke-width="1.3" stroke-linejoin="round" opacity="1"/><polyline points="49.8,247.5 51.0,250.0 52.0,291.0 53.0,302.0 54.0,262.0 55.0,249.0 57.5,249.6 60.0,251.0 63.0,259.0 64.0,250.0 66.5,255.2 69.0,250.0 70.0,302.0 71.0,290.0 72.0,250.0 74.0,252.2 76.0,252.7 78.0,251.4 80.0,253.0 82.0,253.0 84.0,250.0 85.0,303.0 86.0,290.0 87.0,251.0 89.0,260.0 91.0,250.0 92.9,255.4 94.7,250.3 96.6,251.4 98.4,255.0 100.3,252.0 102.1,252.7 104.0,252.0 105.0,262.0 106.0,299.0 107.0,250.0 108.8,250.1 110.6,251.7 112.4,251.3 114.2,249.5 116.0,249.8 117.8,250.6 119.6,249.8 121.4,251.3 123.2,249.8 125.0,251.0 126.9,250.7 128.8,255.7 130.6,254.1 132.5,254.2 134.4,255.5 136.2,253.7 138.1,251.6 140.0,256.0 141.8,254.6 143.5,257.3 145.2,250.6 147.0,251.5 148.8,252.0 150.5,250.0 152.8,247.6 155.0,248.0 157.5,250.6 160.0,254.0 162.0,265.5 164.0,279.0 166.0,250.0 167.7,258.4 169.4,255.8 171.1,253.9 172.9,254.2 174.6,253.8 176.3,256.6 178.0,256.0 180.5,256.2 183.0,258.0 184.8,255.9 186.5,253.4 188.2,254.8 190.0,252.0 191.7,258.3 193.4,253.5 195.1,251.7 196.8,251.9 198.5,253.5 200.2,253.1 201.9,253.2 203.6,252.5 205.3,251.6 207.0,259.1 208.7,256.6 210.4,251.7 212.1,253.5 213.8,256.5 215.5,253.0 217.2,251.4 218.9,252.7 220.6,253.1 222.3,248.7 224.0,252.6 225.7,253.2 227.4,251.6 229.1,251.3 230.8,252.7 232.5,252.1 234.2,252.5 235.9,253.5 237.6,260.4 239.3,253.6 241.0,251.1 242.7,251.4 244.4,254.1 246.1,254.0 247.8,253.8 249.5,251.9 251.2,248.6 252.9,251.8 254.6,251.6 256.3,251.9 258.0,253.2 259.7,251.2 261.4,253.4 263.1,252.2 264.8,253.8 266.5,256.6 268.2,259.1 269.9,252.6 271.6,252.3 273.3,252.3 275.0,252.5 276.7,254.1 278.4,252.5 280.1,253.7 281.9,251.4 283.6,252.8 285.3,252.7 287.0,252.9 288.7,251.5 290.4,253.6 292.1,251.8 293.8,252.7 295.5,252.0 297.2,253.2 298.9,251.9 300.6,254.2 302.3,245.4 304.0,248.6 305.7,254.6 307.4,254.3 309.1,254.2 310.8,253.0 312.5,254.4 314.2,252.5 315.9,253.4 317.6,252.2 319.3,254.1 321.0,252.0 322.7,250.8 324.4,253.8 326.1,253.9 327.8,253.3 329.5,253.3 331.2,253.4 332.9,252.0 334.6,253.6 336.3,254.5 338.0,253.5 339.7,258.3 341.4,252.4 343.1,250.4 344.8,254.4 346.5,249.2 348.2,248.2 349.9,254.5 351.6,252.8 353.3,253.8 355.0,255.1 356.7,254.8 358.4,252.5 360.1,250.6 361.8,248.2 363.5,253.0 365.2,253.9 366.9,252.5 368.6,252.9 370.3,254.6 372.0,254.0 373.0,281.0 375.0,252.0 376.7,251.0 378.5,250.9 380.2,252.6 382.0,253.5 383.7,252.6 385.5,251.1 387.2,252.9 388.9,253.5 390.7,254.2 392.4,252.2 394.2,252.5 395.9,249.5 397.6,253.3 399.4,253.2 401.1,256.0 402.9,253.4 404.6,253.1 406.4,252.0 408.1,258.1 409.8,252.0 411.6,252.5 413.3,253.7 415.1,253.9 416.8,252.4 418.5,258.3 420.3,254.9 422.0,253.4 423.8,252.2 425.5,254.1 427.3,254.4 429.0,254.0 430.0,278.0 432.0,252.0 433.7,253.4 435.4,251.3 437.1,250.6 438.9,251.8 440.6,250.8 442.3,250.7 444.0,259.1 445.7,252.3 447.4,253.3 449.1,251.7 450.9,250.9 452.6,253.3 454.3,250.9 456.0,253.3 457.7,253.3 459.4,254.8 461.1,252.1 462.9,253.3 464.6,253.4 466.3,252.9 468.0,253.7 469.7,252.0 471.4,254.3 473.1,258.0 474.9,253.7 476.6,253.7 478.3,254.2 480.0,252.2 481.7,253.5 483.4,253.6 485.1,253.0 486.9,253.8 488.6,253.0 490.3,253.4 492.0,252.3 493.7,251.9 495.4,258.9 497.1,256.0 498.9,254.0 500.6,254.1 502.3,252.1 504.0,253.1 505.7,254.6 507.4,252.2 509.1,254.9 510.9,252.4 512.6,246.2 514.3,254.1 516.0,254.2 517.7,248.7 519.4,253.2 521.1,252.3 522.9,253.2 524.6,253.5 526.3,255.4 528.0,254.0 529.0,278.0 531.0,252.0 532.7,253.1 534.4,250.5 536.1,251.8 537.8,251.5 539.6,252.2 541.3,249.5 543.0,250.5 544.7,252.9 546.4,250.5 548.1,252.1 549.8,251.1 551.5,251.6 553.3,251.3 555.0,251.4 556.7,252.8 558.4,250.9 560.1,250.8 561.8,252.8 563.5,252.6 565.2,251.8 567.0,250.3 568.7,251.2 570.4,253.5 572.1,251.8 573.8,251.3 575.5,252.3 577.2,253.0 578.9,251.7 580.6,251.1 582.4,252.8 584.1,251.2 585.8,253.1 587.5,251.1 589.2,253.5 590.9,251.3 592.6,252.9 594.3,255.5 596.1,252.4 597.8,251.8 599.5,253.8 601.2,251.1 602.9,251.1 604.6,253.9 606.3,253.1 608.0,251.4 609.8,251.1 611.5,258.2 613.2,253.0 614.9,252.8 616.6,251.3 618.3,252.1 620.0,253.7 621.7,252.7 623.4,252.2 625.2,253.2 626.9,253.3 628.6,253.6 630.3,252.9 632.0,251.9 633.7,251.2 635.4,253.4 637.1,252.9 638.9,252.3 640.6,252.9 642.3,253.1 644.0,251.5 645.7,253.4 647.4,252.5 649.1,251.1 650.8,251.5 652.6,254.0 654.3,251.3 656.0,252.7 657.7,252.6 659.4,253.7 661.1,252.3 662.8,251.7 664.5,252.3 666.2,251.4 668.0,256.8 669.7,251.1 671.4,252.4 673.1,252.2 674.8,251.8 676.5,254.1 678.2,251.8 679.9,252.4 681.7,251.5 683.4,253.7 685.1,252.6 686.8,251.9 688.5,252.3 690.2,253.8 691.9,252.6 693.6,248.5 695.4,253.9 697.1,252.4 698.8,252.5 700.5,251.2 702.2,252.1 703.9,252.2 705.6,252.6 707.3,253.3 709.0,254.2 710.8,251.4 712.5,254.1 714.2,251.7 715.9,260.1 717.6,253.4 719.3,257.7 721.0,246.2 722.7,251.8 724.5,253.3 726.2,253.5 727.9,253.8 729.6,252.0 731.3,253.0 733.0,252.7 734.7,253.1 736.4,255.3 738.2,257.9 739.9,253.1 741.6,251.4 743.3,252.9 745.0,253.0 746.0,258.0" fill="none" stroke="#d8d800" stroke-width="1.15" stroke-linejoin="round" opacity="1"/><polyline points="94.0,242.5 96.0,241.0 97.5,220.5 99.0,236.0 100.0,242.0 102.0,242.5 104.0,241.6 106.0,243.4 108.0,242.4 110.0,240.6 112.0,242.0 114.0,234.3 116.0,242.0 117.9,242.5 119.8,241.5 121.7,242.0 123.6,239.8 125.5,242.4 127.4,243.1 129.3,241.9 131.2,242.8 133.1,241.8 135.0,242.0 137.5,243.3 140.0,244.3 142.0,243.7 144.0,244.0 146.0,243.6 148.0,245.6 150.0,244.2 150.6,223.2 152.8,224.5 155.0,224.0 157.0,227.0 159.0,222.0 162.0,225.0 164.5,222.5 167.0,221.0 170.0,219.0 171.0,212.0 173.0,212.0 175.0,217.0 178.0,219.0 180.0,217.5 181.8,217.7 183.6,214.8 185.5,218.6 187.3,216.0 189.1,215.8 190.9,218.6 192.7,217.7 194.5,218.5 196.4,217.5 198.2,217.7 200.0,217.7 201.8,217.6 203.6,217.8 205.5,212.5 207.3,218.2 209.1,216.6 210.9,217.8 212.7,216.2 214.5,216.6 216.4,216.6 218.2,218.1 220.0,214.7 221.8,217.6 223.6,217.9 225.5,215.2 227.3,216.9 229.1,218.0 230.9,216.3 232.7,216.9 234.5,213.4 236.4,217.0 238.2,217.8 240.0,217.5 241.8,214.9 243.6,215.5 245.5,215.3 247.3,217.1 249.1,217.3 250.9,214.9 252.7,216.8 254.5,217.4 256.4,217.5 258.2,211.3 260.0,216.0 261.9,217.1 263.8,215.7 265.6,215.4 267.5,216.5 269.4,216.2 271.2,216.6 273.1,215.8 275.0,217.0 276.0,208.0 277.0,216.0 278.9,215.6 280.7,216.4 282.6,215.7 284.4,217.3 286.3,216.2 288.1,214.7 290.0,216.0 292.5,212.6 295.0,208.0 296.8,207.5 298.6,209.4 300.5,208.3 302.3,207.8 304.1,207.6 305.9,208.3 307.7,208.9 309.5,206.5 311.4,207.8 313.2,208.9 315.0,208.0 317.0,207.6 319.0,210.9 321.0,211.2 323.0,213.1 325.0,213.0 327.5,215.6 330.0,217.0 332.0,215.7 334.0,215.6 336.0,213.7 338.0,215.1 340.0,213.0 341.8,213.3 343.6,212.9 345.5,212.3 347.3,213.9 349.1,211.8 350.9,213.8 352.7,213.2 354.5,214.2 356.4,212.9 358.2,212.1 360.0,212.0 361.8,212.6 363.6,212.7 365.5,208.0 367.3,212.6 369.1,213.4 370.9,212.0 372.7,212.5 374.5,207.6 376.4,214.1 378.2,213.2 380.0,213.0 381.8,213.8 383.6,214.3 385.5,213.9 387.3,209.7 389.1,211.9 390.9,211.5 392.7,213.9 394.5,214.1 396.4,211.4 398.2,212.4 400.0,214.0 401.8,212.8 403.6,214.0 405.5,212.3 407.3,211.5 409.1,214.0 410.9,211.1 412.7,212.0 414.5,213.6 416.4,211.0 418.2,213.0 420.0,213.8 421.8,211.2 423.6,213.6 425.5,211.6 427.3,213.0 429.1,211.7 430.9,211.0 432.7,211.1 434.5,211.0 436.4,210.6 438.2,207.3 440.0,211.2 441.8,213.1 443.6,210.9 445.5,210.7 447.3,212.9 449.1,211.7 450.9,212.8 452.7,212.2 454.5,210.9 456.4,212.4 458.2,210.6 460.0,211.0 461.8,210.6 463.6,212.6 465.5,210.6 467.3,211.0 469.1,210.4 470.9,210.2 472.7,212.0 474.5,211.4 476.4,210.7 478.2,211.0 480.0,212.8 481.8,210.1 483.6,212.5 485.5,211.9 487.3,209.0 489.1,210.7 490.9,209.7 492.7,211.2 494.5,210.9 496.4,210.2 498.2,209.9 500.0,211.0 501.8,211.9 503.6,210.3 505.4,210.1 507.2,211.5 509.0,210.7 510.8,212.3 512.6,212.1 514.4,210.7 516.2,211.8 518.0,210.9 519.8,211.8 521.6,213.5 523.4,211.1 525.2,212.6 527.0,212.1 528.8,213.9 530.6,212.0 532.4,210.4 534.2,213.1 536.0,212.3 537.8,214.5 539.6,213.1 541.4,213.4 543.2,212.6 545.0,214.0 546.9,214.4 548.7,212.0 550.6,207.2 552.4,209.2 554.3,207.8 556.1,206.8 558.0,207.0 559.9,208.0 561.8,206.4 563.6,208.5 565.5,209.3 567.4,210.2 569.3,208.1 571.2,209.9 573.1,209.6 574.9,210.4 576.8,211.4 578.7,210.5 580.6,212.7 582.5,213.3 584.4,212.4 586.2,214.2 588.1,213.3 590.0,214.0 592.0,214.0 594.0,211.6 596.0,211.4 598.0,211.7 600.0,210.0 601.8,210.9 603.6,208.6 605.4,211.3 607.2,209.1 609.0,210.2 610.8,209.9 612.6,209.5 614.4,208.2 616.2,211.0 618.0,210.9 619.8,210.5 621.6,207.4 623.4,208.8 625.2,208.8 627.0,210.7 628.8,208.6 630.6,209.1 632.4,208.6 634.2,209.7 636.0,209.5 637.8,209.2 639.6,209.0 641.4,208.0 643.2,207.9 645.0,209.0 647.0,205.7 649.0,203.0 652.0,209.0 653.8,208.2 655.6,209.1 657.4,209.3 659.2,209.4 661.0,209.5 662.8,209.0 664.7,208.8 666.5,208.1 668.3,208.9 670.1,206.4 671.9,209.9 673.7,208.9 675.5,208.1 677.3,208.1 679.1,207.7 680.9,209.8 682.7,207.4 684.5,208.5 686.3,207.5 688.2,210.0 690.0,207.6 691.8,208.1 693.6,208.9 695.4,209.5 697.2,209.2 699.0,209.3 700.8,209.3 702.6,209.7 704.4,206.0 706.2,208.7 708.0,209.8 709.8,208.1 711.7,209.5 713.5,208.0 715.3,208.2 717.1,207.7 718.9,208.5 720.7,207.7 722.5,209.3 724.3,208.1 726.1,207.6 727.9,208.4 729.7,206.9 731.5,207.6 733.3,209.1 735.2,207.2 737.0,207.2 738.8,208.3 740.6,209.3 742.4,208.2 744.2,208.1 746.0,208.0" fill="none" stroke="#b82222" stroke-width="1.15" stroke-linejoin="round" opacity="1"/><line x1="150.4" y1="158" x2="150.4" y2="316" stroke="#d0d0d0" stroke-width="1" stroke-dasharray="2,2"/><polyline points="49.5,493.0 51.0,513.0 52.9,513.4 54.8,512.7 56.6,512.7 58.5,513.2 60.4,512.6 62.2,514.1 64.1,513.4 66.0,513.0 67.0,507.0 69.0,513.0 70.8,513.1 72.6,512.0 74.4,512.7 76.2,512.8 78.0,513.1 79.8,513.2 81.6,513.9 83.4,514.1 85.2,513.0 87.0,512.9 88.8,513.3 90.6,514.2 92.4,512.6 94.2,513.1 96.0,513.0 98.0,501.0 101.0,513.0 103.0,513.8 105.0,512.2 107.0,512.6 109.0,514.1 111.0,513.8 113.0,513.0 115.0,505.0 118.0,513.0 121.0,513.0 122.0,508.0 124.0,513.0 125.8,513.0 127.7,512.1 129.5,513.9 131.4,513.5 133.2,513.8 135.1,514.2 136.9,513.9 138.8,512.8 140.6,512.2 142.5,512.5 144.3,513.0 146.2,513.0 148.0,513.0 150.0,505.0 153.0,482.0 155.0,479.0 158.0,493.0 160.0,497.0 163.0,490.0 166.0,482.0 168.0,480.0 170.0,482.0 172.0,476.0 174.0,481.0 176.0,475.0 178.0,471.0 178.7,450.0 179.2,433.0 180.0,445.0 181.0,465.0 184.0,470.0 186.0,467.0 188.0,471.0 190.0,466.0 193.0,477.0 196.0,486.0 199.0,488.0 202.0,484.0 205.0,488.0 207.0,492.0 210.0,487.0 212.0,489.0 215.0,481.0 217.0,490.0 219.0,494.0 222.0,486.0 224.0,488.0 227.0,495.0 229.0,497.0 230.8,496.2 232.7,496.1 234.5,497.1 236.3,497.0 238.2,496.4 240.0,497.9 241.8,496.9 243.7,495.5 245.5,496.3 247.3,497.1 249.2,495.9 251.0,496.8 252.8,495.1 254.7,495.8 256.5,497.0 258.3,496.3 260.2,496.5 262.0,496.0 264.0,493.0 266.0,497.0 267.8,496.3 269.7,497.0 271.5,497.1 273.4,496.4 275.2,497.4 277.1,497.1 278.9,498.2 280.7,497.2 282.6,496.8 284.4,496.1 286.3,496.2 288.1,497.6 289.9,496.1 291.8,496.0 293.6,496.2 295.5,497.1 297.3,497.8 299.2,497.3 301.0,497.0 303.0,488.0 305.5,493.7 308.0,498.0 310.0,488.4 312.0,481.0 313.8,479.8 315.6,481.6 317.4,480.6 319.2,481.5 321.0,481.0 323.0,496.0 324.8,495.6 326.6,495.2 328.5,495.4 330.3,495.0 332.1,497.0 333.9,496.2 335.8,495.6 337.6,495.9 339.4,495.7 341.2,494.9 343.0,496.9 344.9,496.2 346.7,497.1 348.5,495.9 350.3,496.3 352.2,495.4 354.0,494.9 355.8,497.0 357.6,496.9 359.4,495.6 361.3,497.0 363.1,496.8 364.9,495.5 366.7,496.2 368.5,497.1 370.4,496.0 372.2,497.1 374.0,495.4 375.8,495.7 377.7,496.5 379.5,495.3 381.3,495.5 383.1,496.9 384.9,496.0 386.8,496.7 388.6,495.4 390.4,495.2 392.2,495.7 394.1,495.2 395.9,497.1 397.7,495.5 399.5,496.1 401.3,495.1 403.2,496.1 405.0,495.7 406.8,495.8 408.6,495.0 410.5,495.1 412.3,496.8 414.1,495.6 415.9,495.4 417.7,495.3 419.6,495.5 421.4,495.4 423.2,494.9 425.0,496.4 426.8,495.6 428.7,495.2 430.5,496.5 432.3,495.0 434.1,495.4 436.0,496.8 437.8,495.1 439.6,495.9 441.4,496.8 443.2,496.7 445.1,495.2 446.9,495.6 448.7,496.5 450.5,495.7 452.4,497.1 454.2,495.3 456.0,496.0 458.0,477.0 460.0,484.1 462.0,489.0 465.0,496.0 466.8,496.0 468.7,495.3 470.5,495.9 472.4,495.1 474.2,496.5 476.1,495.4 477.9,497.0 479.8,496.2 481.6,495.7 483.5,495.4 485.3,496.3 487.2,495.3 489.0,496.9 490.9,495.1 492.7,496.0 494.6,496.1 496.4,495.4 498.3,496.7 500.1,495.7 502.0,496.4 503.8,496.2 505.7,495.5 507.5,495.7 509.4,495.0 511.2,495.2 513.1,496.8 514.9,495.6 516.8,496.4 518.6,495.1 520.5,496.1 522.3,495.7 524.2,496.0 526.0,496.0 528.0,492.0 530.0,496.0 531.9,495.5 533.7,495.0 535.6,495.5 537.4,495.3 539.3,495.1 541.1,496.5 543.0,496.0 545.0,491.0 547.0,496.0 548.8,495.5 550.6,495.8 552.4,497.0 554.2,496.7 556.0,496.0 558.0,484.0 560.5,490.9 563.0,496.0 565.0,496.9 567.0,495.1 569.0,495.5 571.0,494.9 573.0,496.0 575.0,487.0 578.0,496.0 580.0,496.4 582.0,496.4 584.0,495.6 586.0,495.8 588.0,496.4 590.0,496.0 592.0,483.0 595.0,498.0 596.8,498.4 598.7,497.2 600.5,498.5 602.3,497.2 604.2,497.8 606.0,496.6 607.8,496.4 609.7,498.2 611.5,497.7 613.3,497.5 615.2,495.8 617.0,495.7 618.8,495.9 620.7,495.9 622.5,496.0 624.3,496.1 626.2,495.2 628.0,495.7 629.8,496.4 631.7,495.2 633.5,496.7 635.3,496.0 637.2,496.2 639.0,495.0 640.8,495.3 642.7,495.8 644.5,494.9 646.3,494.0 648.2,495.9 650.0,495.0 652.0,488.0 654.0,490.4 656.0,491.0 658.0,492.2 660.0,495.0 661.8,495.9 663.7,495.3 665.5,494.0 667.3,494.5 669.1,494.2 671.0,495.8 672.8,494.5 674.6,496.2 676.4,495.8 678.3,494.2 680.1,495.7 681.9,495.0 683.7,495.9 685.6,496.1 687.4,494.8 689.2,494.4 691.0,496.4 692.9,495.2 694.7,496.4 696.5,495.9 698.3,496.0 700.2,496.3 702.0,495.8 703.8,495.4 705.7,494.5 707.5,496.0 709.3,495.4 711.1,495.6 713.0,496.7 714.8,494.8 716.6,496.3 718.4,494.6 720.3,496.2 722.1,496.5 723.9,495.2 725.7,495.9 727.6,496.9 729.4,496.2 731.2,496.0 733.0,495.3 734.9,494.8 736.7,495.6 738.5,495.7 740.3,495.2 742.2,495.5 744.0,496.0 745.0,486.0 748.0,493.0" fill="none" stroke="#bab400" stroke-width="1.1" stroke-linejoin="round" opacity="1"/></svg>
<div style="position:absolute;left:161px;top:144px;width:7.5px;height:7.5px;background:#f4f4f4"></div><svg style="position:absolute;left:161px;top:144px" width="8" height="8" viewBox="0 0 8 8"><path d="M1.5 4.2 L3.3 6 L6.6 2.2" stroke="#707070" stroke-width="1.1" fill="none"/></svg><div class="t" style="left:172.10px;top:144.09px;font-size:8.4px;color:#f0ec00;transform:scaleX(0.9507);">CPU Clock (MHz)</div><div style="position:absolute;left:242.6px;top:144px;width:7.5px;height:7.5px;background:#f4f4f4"></div><svg style="position:absolute;left:242.6px;top:144px" width="8" height="8" viewBox="0 0 8 8"><path d="M1.5 4.2 L3.3 6 L6.6 2.2" stroke="#707070" stroke-width="1.1" fill="none"/></svg><div class="t" style="left:253.30px;top:144.09px;font-size:8.4px;color:#a4bcec;transform:scaleX(0.9927);">Motherboard (°C)</div><div style="position:absolute;left:325.3px;top:144px;width:7.5px;height:7.5px;background:#f4f4f4"></div><svg style="position:absolute;left:325.3px;top:144px" width="8" height="8" viewBox="0 0 8 8"><path d="M1.5 4.2 L3.3 6 L6.6 2.2" stroke="#707070" stroke-width="1.1" fill="none"/></svg><div class="t" style="left:336.00px;top:144.09px;font-size:8.4px;color:#c0c0c0;transform:scaleX(0.9001);">CPU (RPM)</div><div style="position:absolute;left:383.4px;top:144px;width:7.5px;height:7.5px;background:#f4f4f4"></div><svg style="position:absolute;left:383.4px;top:144px" width="8" height="8" viewBox="0 0 8 8"><path d="M1.5 4.2 L3.3 6 L6.6 2.2" stroke="#707070" stroke-width="1.1" fill="none"/></svg><div class="t" style="left:394.50px;top:144.09px;font-size:8.4px;color:#e02020;transform:scaleX(0.9120);">CPU (°C)</div><div style="position:absolute;left:434px;top:144px;width:7.5px;height:7.5px;background:#f4f4f4"></div><svg style="position:absolute;left:434px;top:144px" width="8" height="8" viewBox="0 0 8 8"><path d="M1.5 4.2 L3.3 6 L6.6 2.2" stroke="#707070" stroke-width="1.1" fill="none"/></svg><div class="t" style="left:444.70px;top:144.09px;font-size:8.4px;color:#d0a868;transform:scaleX(0.9226);">CPU Package (W)</div><div style="position:absolute;left:515.3px;top:144px;width:7.5px;height:7.5px;background:#f4f4f4"></div><svg style="position:absolute;left:515.3px;top:144px" width="8" height="8" viewBox="0 0 8 8"><path d="M1.5 4.2 L3.3 6 L6.6 2.2" stroke="#707070" stroke-width="1.1" fill="none"/></svg><div class="t" style="left:526.00px;top:144.09px;font-size:8.4px;color:#f0f0f0;transform:scaleX(0.9401);">BIWIN NA80V1M10-1TB (°C)</div><div class="t" style="left:34.40px;top:154.69px;font-size:8.4px;color:#d4d4d4;transform:scaleX(0.8706);-webkit-text-stroke:0;">100</div><div class="t" style="left:42.00px;top:312.09px;font-size:8.4px;color:#d4d4d4;transform:scaleX(1.0062);-webkit-text-stroke:0;">0</div><div class="t" style="left:120.80px;top:319.89px;font-size:8.4px;color:#c8c8c8;transform:scaleX(0.8870);-webkit-text-stroke:0;">23:13:09</div><div class="t" style="left:749.80px;top:203.69px;font-size:8.4px;color:#e02020;transform:scaleX(0.9098);-webkit-text-stroke:0;">69</div><div class="t" style="left:749.80px;top:241.69px;font-size:8.4px;color:#f0f0f0;transform:scaleX(0.9098);-webkit-text-stroke:0;">45</div><div class="t" style="left:767.80px;top:242.89px;font-size:8.4px;color:#9bb4e0;transform:scaleX(0.9098);-webkit-text-stroke:0;">44</div><div style="position:absolute;left:760px;top:240px;width:22px;height:20px;overflow:hidden"><div style="position:absolute;left:-760px;top:-240px;width:796px;height:600px"><div class="t" style="left:767.80px;top:246.49px;font-size:8.4px;color:#e0e000;transform:scaleX(0.9366);-webkit-text-stroke:0;">4190</div></div></div><div class="t" style="left:749.80px;top:257.69px;font-size:8.4px;color:#d0a868;transform:scaleX(0.8897);-webkit-text-stroke:0;">34.59</div><div class="t" style="left:749.80px;top:270.39px;font-size:8.4px;color:#c8c8c8;transform:scaleX(0.9098);-webkit-text-stroke:0;">2647</div><div class="t" style="left:346.20px;top:345.49px;font-size:8.4px;color:#d0c800;transform:scaleX(0.8952);">CPU Usage</div><div class="t" style="left:390.20px;top:345.69px;font-size:8.4px;color:#d0d8f0;transform:scaleX(0.9163);-webkit-text-stroke:0;">|</div><div class="t" style="left:396.80px;top:345.49px;font-size:8.4px;color:#00cc00;transform:scaleX(0.9867);">CPU Throttling</div><div class="t" style="left:27.50px;top:356.49px;font-size:8.4px;color:#d4d4d4;transform:scaleX(0.9077);-webkit-text-stroke:0;">100%</div><div class="t" style="left:35.00px;top:511.89px;font-size:8.4px;color:#d4d4d4;transform:scaleX(0.9637);-webkit-text-stroke:0;">0%</div><div class="t" style="left:750.00px;top:490.89px;font-size:8.4px;color:#c8c000;transform:scaleX(0.8922);-webkit-text-stroke:0;">14%</div><div class="t" style="left:750.00px;top:511.89px;font-size:8.4px;color:#00c000;transform:scaleX(0.9472);-webkit-text-stroke:0;">0%</div>
<div class="t" style="left:183.90px;top:553.69px;font-size:8.4px;color:#1a1a1a;transform:scaleX(0.9674);">Remaining Battery:</div><div style="position:absolute;left:261.2px;top:549.2px;width:54.9px;height:15.6px;background:#000"></div><div class="t" style="left:269.50px;top:552.59px;font-size:8.4px;color:#00c000;transform:scaleX(0.9987);">No battery</div><div class="t" style="left:333.30px;top:553.69px;font-size:8.4px;color:#1a1a1a;transform:scaleX(0.9183);">Test Started:</div><div style="position:absolute;left:385.3px;top:549px;width:96.1px;height:16px;background:#000"></div><div class="t" style="left:399.30px;top:552.59px;font-size:8.4px;color:#00c000;transform:scaleX(0.8850);">30.01.2026 23:13:09</div><div class="t" style="left:498.40px;top:553.69px;font-size:8.4px;color:#1a1a1a;transform:scaleX(0.9413);">Elapsed Time:</div><div style="position:absolute;left:556.8px;top:549px;width:55.4px;height:16px;background:#000"></div><div class="t" style="left:570.00px;top:552.59px;font-size:8.4px;color:#00c000;transform:scaleX(0.8870);">00:07:13</div><div style="position:absolute;left:13px;top:574.6px;width:49.1px;height:13.6px;box-sizing:border-box;background:#f6f6f6;border:1px solid #ececec;border-radius:3px"></div><div class="t" style="left:29.39px;top:578.09px;font-size:8.4px;color:#a0a0a0;transform:scaleX(0.9200);">Start</div><div style="position:absolute;left:68px;top:574.2px;width:50.599999999999994px;height:14.4px;box-sizing:border-box;background:#fdfdfd;border:1.2px solid #5c9ae0;border-radius:3px"></div><div class="t" style="left:85.35px;top:578.09px;font-size:8.4px;color:#1a1a1a;transform:scaleX(0.9200);">Stop</div><div style="position:absolute;left:136.3px;top:574.6px;width:50.19999999999999px;height:13.6px;box-sizing:border-box;background:#fbfbfb;border:1px solid #d6d6d6;border-radius:3px"></div><div class="t" style="left:152.17px;top:578.09px;font-size:8.4px;color:#1a1a1a;transform:scaleX(0.9200);">Clear</div><div style="position:absolute;left:192.4px;top:574.6px;width:49.79999999999998px;height:13.6px;box-sizing:border-box;background:#fbfbfb;border:1px solid #d6d6d6;border-radius:3px"></div><div class="t" style="left:208.49px;top:578.09px;font-size:8.4px;color:#1a1a1a;transform:scaleX(0.9200);">Save</div><div style="position:absolute;left:261px;top:574.6px;width:49.69999999999999px;height:13.6px;box-sizing:border-box;background:#fbfbfb;border:1px solid #d6d6d6;border-radius:3px"></div><div class="t" style="left:273.83px;top:578.09px;font-size:8.4px;color:#1a1a1a;transform:scaleX(0.9200);">CPUID</div><div style="position:absolute;left:316.5px;top:574.6px;width:50.0px;height:13.6px;box-sizing:border-box;background:#fbfbfb;border:1px solid #d6d6d6;border-radius:3px"></div><div class="t" style="left:320.67px;top:578.09px;font-size:8.4px;color:#1a1a1a;transform:scaleX(0.9200);">Preferences</div><div style="position:absolute;left:735px;top:574.6px;width:48.200000000000045px;height:13.6px;box-sizing:border-box;background:#f6f6f6;border:1px solid #ececec;border-radius:3px"></div><div class="t" style="left:749.22px;top:578.09px;font-size:8.4px;color:#a0a0a0;transform:scaleX(0.9200);">Close</div>
<svg style="position:absolute;left:0;top:0" width="796" height="600" viewBox="0 0 796 600">
<defs>
<clipPath id="cTop"><rect x="0" y="0" width="796" height="535.4"/></clipPath>
<clipPath id="cBot"><rect x="0" y="535.4" width="796" height="80"/></clipPath>
<g id="logo3d">
<path d="M654 537.5 L654 533 Q654 524.8 662 524.8 L680 524.8 Q685.6 524.8 685.6 530.5 L685.6 531.2 L660.3 531.2 L660.3 537.5 Z"/><path d="M687.2 524.8 L709 524.8 Q717 524.8 717 532.8 L717 535.5 L710 535.5 L710 531.2 L687.2 531.2 Z"/>
<path d="M710 535 L717 535 L717 546.5 Q717 552.7 711 552.7 L680.5 552.7 L680.5 546.5 L703 546.5 Q710 546.5 710 539 Z"/>
<rect x="664" y="536" width="15" height="5.5"/>
<rect x="673.5" y="536" width="5.5" height="16.7"/>
<rect x="652.5" y="546.5" width="26.5" height="6.2"/>
<rect x="680.5" y="536" width="6.5" height="16.7"/>
</g>
</defs>
<g clip-path="url(#cBot)">
<path d="M646 535 L768 535 L776 541 L782 548 L786 556 L785 563 L781 568 L780 574 L774 578 L760 579 L745 577.5 L728 576 L712 574.5 L698 575 L682 578 L668 581 L656 584 L654 578 L650 568 L646 558 L641 549 L645 542 Z" fill="#7c7c7c"/>
<g stroke="#7c7c7c" stroke-width="0.9" opacity="0.6" fill="none"><path d="M726 575 L752 584 M740 576 L768 588 M756 578 L776 586 M770 576 L782 580 M706 575 L735 582"/></g>
<g stroke="#999" stroke-width="0.6" opacity="0.7" fill="none"><path d="M690 568 L750 578 M672 572 L720 569 M700 565 L770 575 M680 575 L715 571"/></g>
<use href="#logo3d" fill="#f2f2f2"/>
<text x="710.4" y="552.3" font-family="Liberation Sans" font-size="13.4" fill="#f2f2f2" stroke="#f2f2f2" stroke-width="0.8" textLength="59.9" lengthAdjust="spacingAndGlyphs">NEWS</text>
<text x="653" y="562.9" font-family="Liberation Sans" font-weight="bold" font-style="italic" font-size="9.8" fill="#f2f2f2" textLength="118" lengthAdjust="spacingAndGlyphs">Daily Digital Digest</text>
</g>
<g clip-path="url(#cTop)"><use href="#logo3d" fill="#7c7c7c"/></g>
</svg>
<div style="opacity:0.85"><div class="t" style="left:749.50px;top:578.09px;font-size:8.4px;color:#9a9a9a;transform:scaleX(0.9267);">Close</div></div>
</body></html>
